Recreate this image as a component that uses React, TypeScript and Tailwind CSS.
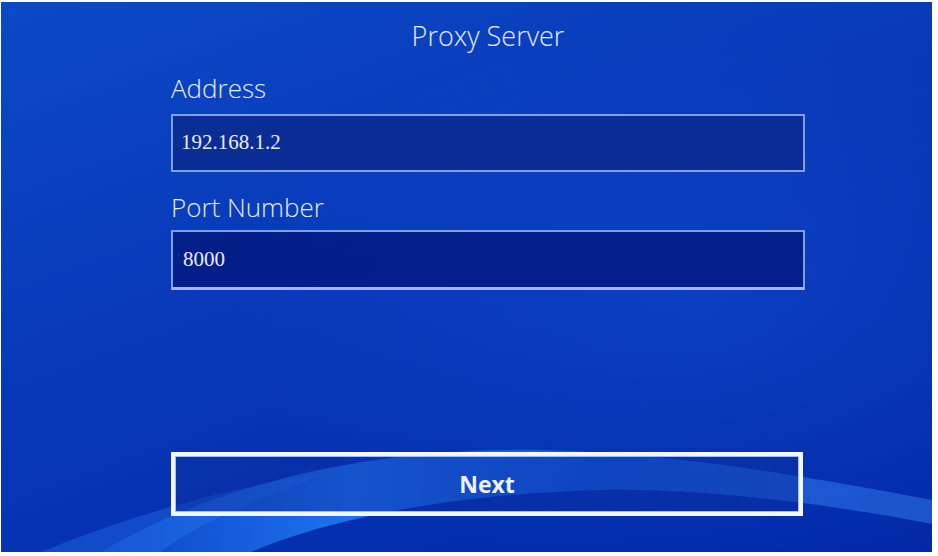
export default function App() {
  return (
    <div className="w-[938px] h-[556px] bg-white overflow-hidden">
      <div className="relative ml-[1px] mt-[2px] w-[931px] h-[550px] overflow-hidden bg-[linear-gradient(160deg,#0b49c6_0%,#0838b8_45%,#0430b0_70%,#0228a6_100%)]">
        {/* background waves */}
        <svg className="absolute inset-0" width="931" height="550" viewBox="0 0 931 550">
          <defs>
            <linearGradient id="w1" x1="0" y1="0" x2="1" y2="0">
              <stop offset="0" stopColor="#1d72f0" stopOpacity="0.3" />
              <stop offset="0.3" stopColor="#1f76f4" stopOpacity="0.95" />
              <stop offset="0.6" stopColor="#1866ea" stopOpacity="0.7" />
              <stop offset="1" stopColor="#3a86f2" stopOpacity="0.45" />
            </linearGradient>
            <radialGradient id="glow" cx="0.75" cy="0.55" r="0.5">
              <stop offset="0" stopColor="#1a5ee0" stopOpacity="0.3" />
              <stop offset="1" stopColor="#1a5ee0" stopOpacity="0" />
            </radialGradient>
          </defs>
          <rect x="0" y="0" width="931" height="550" fill="url(#glow)" />
          <path d="M100 550 C220 480 370 445 540 448 C690 452 820 478 931 498 L931 522 C830 502 700 486 600 488 C440 492 320 520 250 550 Z" fill="url(#w1)" />
          <path d="M40 550 C150 505 250 482 330 470 C250 500 190 525 160 550 Z" fill="#2a7cf3" fillOpacity="0.35" />
        </svg>

        <div className="relative w-[634px] ml-[170px] flex flex-col font-['Open_Sans',sans-serif] text-white">
          <div className="pt-[17px] text-center text-[27px] font-light leading-[34px] text-[#e6ecff]">
            Proxy Server
          </div>
          <div className="mt-[18px] text-[26px] font-light leading-[34px] text-[#e6ecff]">Address</div>
          <div className="mt-[9px] h-[58px] border-2 border-[#7f9fea] bg-[#0a2a8e]/85 flex items-center pl-[8px]">
            <span className="font-['Liberation_Serif',serif] text-[21px] text-[#e8eeff]">192.168.1.2</span>
          </div>
          <div className="mt-[18px] text-[26px] font-light leading-[34px] text-[#e6ecff]">Port Number</div>
          <div className="mt-[6px] h-[60px] border-2 border-b-[3px] border-[#7f9fea] border-b-[#9db8f5] bg-[#041c84]/90 flex items-center pl-[10px]">
            <span className="font-['Liberation_Serif',serif] text-[21px] text-[#e8eeff]">8000</span>
          </div>
          <div className="mt-[162px] h-[64px] w-[632px] border-[4px] border-[#f2f6ff] bg-[#0a2fa0]/45 flex items-center justify-center shadow-[inset_0_0_0_1px_#9fbaff]">
            <span className="text-[23px] font-bold text-[#eef3ff]">Next</span>
          </div>
        </div>
      </div>
    </div>
  );
}
